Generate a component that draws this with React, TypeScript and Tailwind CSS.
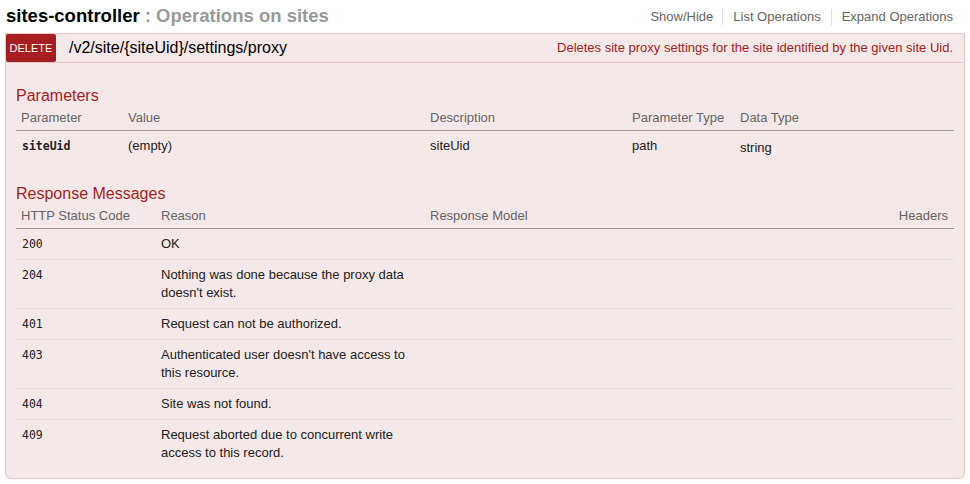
import React from "react";

const params = [{ name: "siteUid", value: "(empty)", desc: "siteUid", type: "path", dataType: "string" }];

const responses = [
  { code: "200", reason: "OK" },
  { code: "204", reason: "Nothing was done because the proxy data doesn't exist." },
  { code: "401", reason: "Request can not be authorized." },
  { code: "403", reason: "Authenticated user doesn't have access to this resource." },
  { code: "404", reason: "Site was not found." },
  { code: "409", reason: "Request aborted due to concurrent write access to this record." },
];

const mono = "font-['DejaVu_Sans_Mono',monospace] text-[11.5px]";

export default function App() {
  return (
    <div className="min-h-[484px] bg-white px-[5px] font-['Liberation_Sans',Arial,sans-serif] text-[13px] text-[#333]">
      {/* resource title + links */}
      <div className="flex h-[33px] items-center justify-between">
        <h2 className="pl-px text-[18.5px] font-bold leading-none text-black">
          sites-controller <span className="text-[#999]">: Operations on sites</span>
        </h2>
        <ul className="flex items-center pr-[12px] text-[13px] text-[#666]">
          <li className="border-r border-[#ddd] pr-[9px] leading-[16px]">Show/Hide</li>
          <li className="border-r border-[#ddd] px-[10px] leading-[16px]">List Operations</li>
          <li className="pl-[10px] leading-[16px]">Expand Operations</li>
        </ul>
      </div>

      {/* operation heading */}
      <div className="flex h-[30px] items-center border border-[#e8c6c7] bg-[#f5e8e8]">
        <span className="flex h-[28px] w-[50px] items-center justify-center rounded-[2px] bg-[#a41e22] text-[11px] text-white">
          DELETE
        </span>
        <span className="ml-[13px] text-[16px] text-black">/v2/site/{"{siteUid}"}/settings/proxy</span>
        <span className="ml-auto pr-[11px] text-[13px] text-[#a41e22]">
          Deletes site proxy settings for the site identified by the given site Uid.
        </span>
      </div>

      {/* operation content */}
      <div className="rounded-b-[6px] border-x border-b border-[#e8c6c7] bg-[#f5e8e8] px-[10px] pt-[22px] pb-[10px]">
        <h4 className="pt-px text-[16px] leading-[20px] text-[#a41e22]">Parameters</h4>
        <div className="grid grid-cols-[107px_302px_202px_108px_1fr] border-b border-[#999] text-[#666]">
          <div className="px-[5px] pt-[3px] pb-[3px] leading-[18px]">Parameter</div>
          <div className="px-[5px] pt-[3px] pb-[3px] leading-[18px]">Value</div>
          <div className="px-[5px] pt-[3px] pb-[3px] leading-[18px]">Description</div>
          <div className="px-[5px] pt-[3px] pb-[3px] leading-[18px]">Parameter Type</div>
          <div className="px-[5px] pt-[3px] pb-[3px] leading-[18px]">Data Type</div>
        </div>
        {params.map((p) => (
          <div key={p.name} className="grid grid-cols-[107px_302px_202px_108px_1fr] text-[#222]">
            <div className={`px-[6px] py-[6px] leading-[18px] font-bold ${mono}`}>{p.name}</div>
            <div className="px-[5px] py-[6px] leading-[18px]">{p.value}</div>
            <div className="px-[5px] py-[6px] leading-[18px]">{p.desc}</div>
            <div className="px-[5px] py-[6px] leading-[18px]">{p.type}</div>
            <div className="px-[5px] pt-[8px] pb-[4px] leading-[18px]">{p.dataType}</div>
          </div>
        ))}

        <h4 className="mt-[22px] pt-px text-[16px] leading-[20px] text-[#a41e22]">Response Messages</h4>
        <div className="grid grid-cols-[140px_269px_1fr_120px] border-b border-[#999] text-[#666]">
          <div className="px-[5px] pt-[3px] pb-[3px] leading-[18px]">HTTP Status Code</div>
          <div className="px-[5px] pt-[3px] pb-[3px] leading-[18px]">Reason</div>
          <div className="px-[5px] pt-[3px] pb-[3px] leading-[18px]">Response Model</div>
          <div className="px-[6px] pt-[3px] pb-[3px] text-right leading-[18px]">Headers</div>
        </div>
        {responses.map((r, i) => (
          <div
            key={r.code}
            className={`grid grid-cols-[140px_269px_1fr_120px] text-[#222] ${i > 0 ? "border-t border-[#ddd]" : ""}`}
          >
            <div className={`px-[6px] py-[6px] leading-[18px] ${mono}`}>{r.code}</div>
            <div className="px-[5px] py-[6px] leading-[18px]">{r.reason}</div>
            <div className="py-[6px]" />
            <div className="py-[6px]" />
          </div>
        ))}
      </div>
    </div>
  );
}
